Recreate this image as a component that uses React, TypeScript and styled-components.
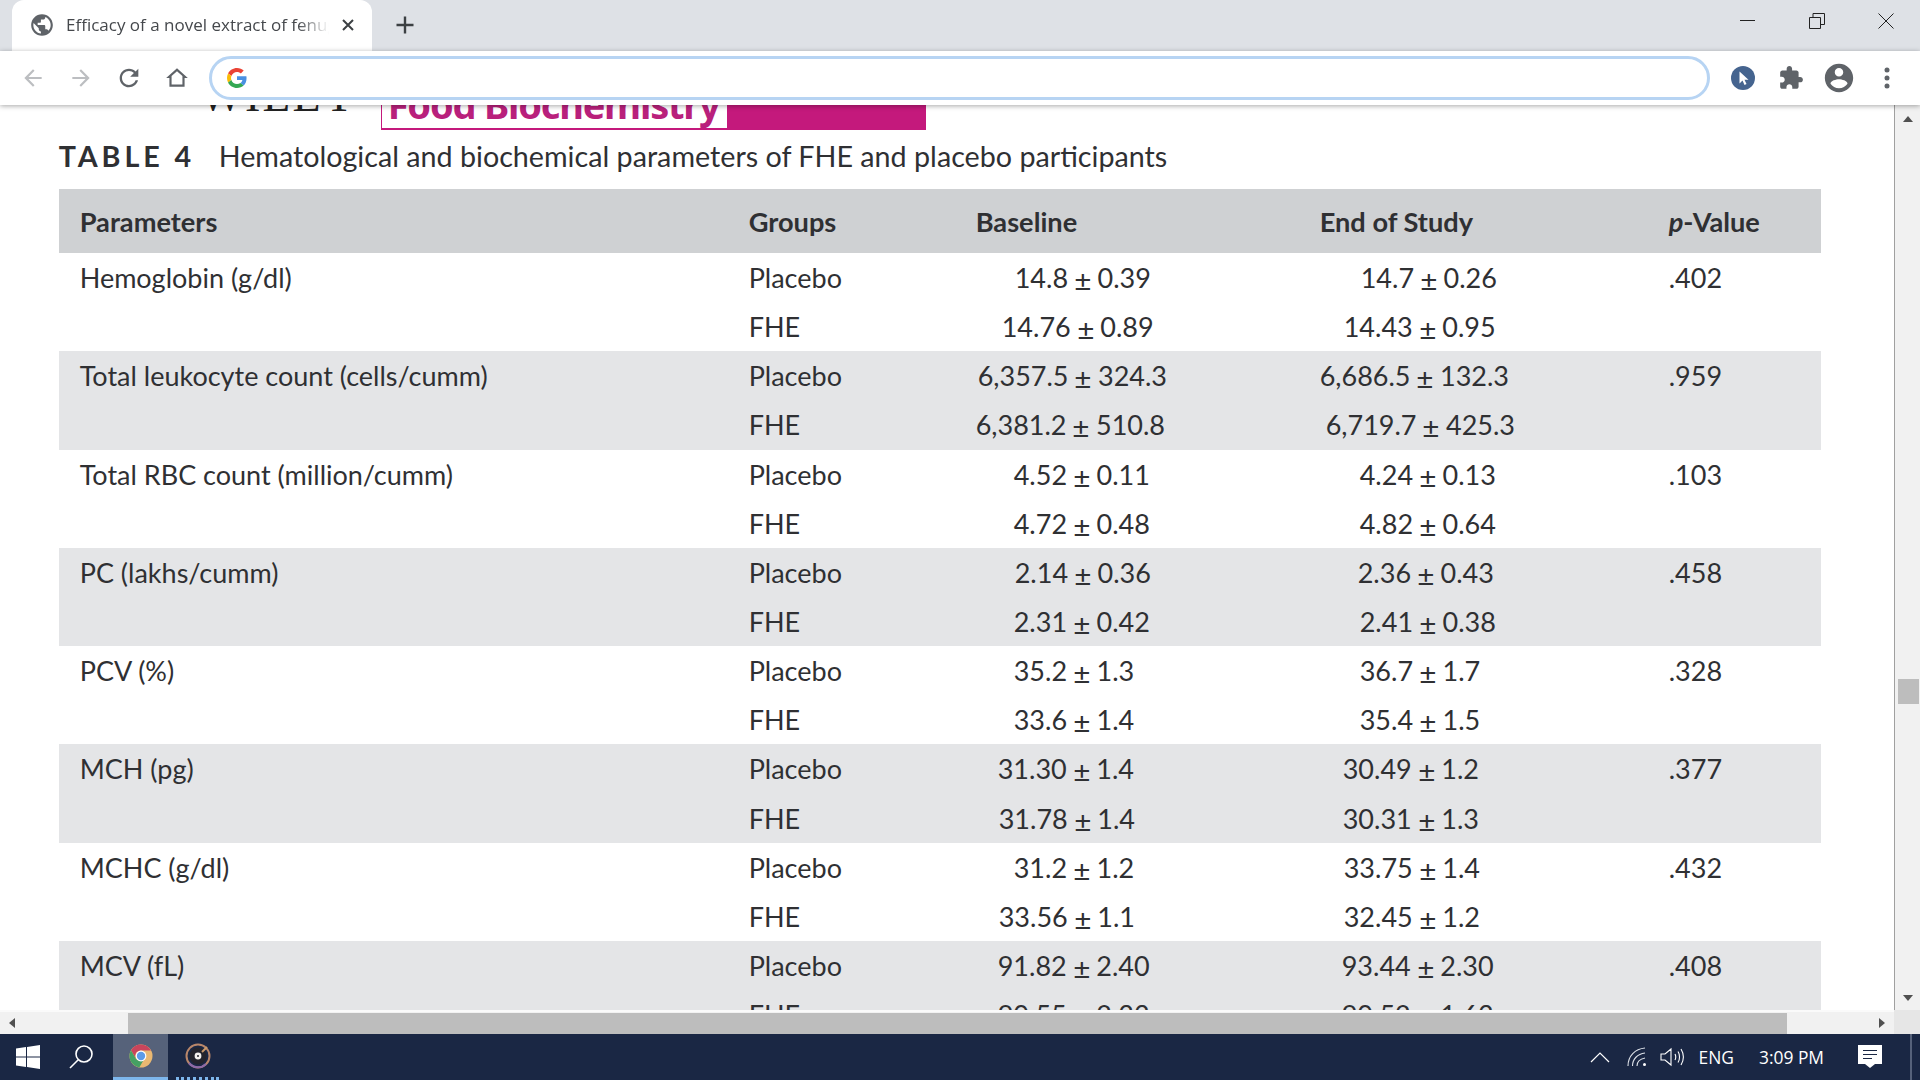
import React from "react";
import styled, { createGlobalStyle } from "styled-components";

const GlobalStyle = createGlobalStyle`
  html, body { margin: 0; padding: 0; height: 100%; overflow: hidden; background: #fff; }
  #root { height: 100%; }
`;

type RowData = { name?: string; group: string; base: string; baseIndent: number; end: string; endIndent: number; p?: string };

const rows: RowData[] = [
  { name: "Hemoglobin (g/dl)", group: "Placebo", base: "14.8 ± 0.39", baseIndent: 39, end: "14.7 ± 0.26", endIndent: 41, p: ".402" },
  { group: "FHE", base: "14.76 ± 0.89", baseIndent: 26, end: "14.43 ± 0.95", endIndent: 24 },
  { name: "Total leukocyte count (cells/cumm)", group: "Placebo", base: "6,357.5 ± 324.3", baseIndent: 2, end: "6,686.5 ± 132.3", endIndent: 0, p: ".959" },
  { group: "FHE", base: "6,381.2 ± 510.8", baseIndent: 0, end: "6,719.7 ± 425.3", endIndent: 6 },
  { name: "Total RBC count (million/cumm)", group: "Placebo", base: "4.52 ± 0.11", baseIndent: 38, end: "4.24 ± 0.13", endIndent: 40, p: ".103" },
  { group: "FHE", base: "4.72 ± 0.48", baseIndent: 38, end: "4.82 ± 0.64", endIndent: 40 },
  { name: "PC (lakhs/cumm)", group: "Placebo", base: "2.14 ± 0.36", baseIndent: 39, end: "2.36 ± 0.43", endIndent: 38, p: ".458" },
  { group: "FHE", base: "2.31 ± 0.42", baseIndent: 38, end: "2.41 ± 0.38", endIndent: 40 },
  { name: "PCV (%)", group: "Placebo", base: "35.2 ± 1.3", baseIndent: 38, end: "36.7 ± 1.7", endIndent: 40, p: ".328" },
  { group: "FHE", base: "33.6 ± 1.4", baseIndent: 38, end: "35.4 ± 1.5", endIndent: 40 },
  { name: "MCH (pg)", group: "Placebo", base: "31.30 ± 1.4", baseIndent: 22, end: "30.49 ± 1.2", endIndent: 23, p: ".377" },
  { group: "FHE", base: "31.78 ± 1.4", baseIndent: 23, end: "30.31 ± 1.3", endIndent: 23 },
  { name: "MCHC (g/dl)", group: "Placebo", base: "31.2 ± 1.2", baseIndent: 38, end: "33.75 ± 1.4", endIndent: 24, p: ".432" },
  { group: "FHE", base: "33.56 ± 1.1", baseIndent: 23, end: "32.45 ± 1.2", endIndent: 24 },
  { name: "MCV (fL)", group: "Placebo", base: "91.82 ± 2.40", baseIndent: 22, end: "93.44 ± 2.30", endIndent: 22, p: ".408" },
  { group: "FHE", base: "90.55 ± 2.33", baseIndent: 22, end: "90.52 ± 1.63", endIndent: 22 },
];

const Screen = styled.div`
  height: 1080px;
  width: 1920px;
  display: flex;
  flex-direction: column;
  overflow: hidden;
`;

/* browser chrome */
const TabStrip = styled.div`
  height: 51px;
  flex: none;
  background: #dee1e6;
  display: flex;
  padding-left: 12px;
`;

const Tab = styled.div`
  width: 360px;
  height: 51px;
  background: #fff;
  border-radius: 12px 12px 0 0;
  display: flex;
  align-items: center;
  padding: 0 17px 1px 17px;
  box-sizing: border-box;
`;

const TabTitle = styled.span`
  flex: 1;
  margin-left: 11px;
  overflow: hidden;
  white-space: nowrap;
  font: 17px/20px "Open Sans", "Noto Sans", sans-serif;
  color: #45484c;
  -webkit-mask-image: linear-gradient(to right, #000 88%, transparent 100%);
  mask-image: linear-gradient(to right, #000 88%, transparent 100%);
`;

const NewTab = styled.div`
  width: 24px;
  height: 24px;
  margin: 13px 0 0 21px;
`;

const WindowControls = styled.div`
  margin-left: auto;
  display: flex;
  gap: 53px;
  padding: 13px 26px 0 0;
  align-items: flex-start;
`;

const Toolbar = styled.div`
  height: 54px;
  flex: none;
  background: #fff;
  display: flex;
  align-items: center;
  padding: 0 9px;
  box-shadow: 0 1px 5px rgba(0, 0, 0, 0.35);
  position: relative;
  z-index: 2;
`;

const ToolButton = styled.div`
  width: 48px;
  height: 48px;
  flex: none;
  display: flex;
  align-items: center;
  justify-content: center;
`;

const Omnibox = styled.div`
  flex: 1;
  height: 44px;
  margin: 0 9px 0 8px;
  box-sizing: border-box;
  border: 3px solid #b7d4f3;
  border-radius: 22px;
  display: flex;
  align-items: center;
  padding-left: 15px;
`;

/* page */
const Viewport = styled.div`
  flex: 1;
  min-height: 0;
  display: grid;
  grid-template-columns: 1fr 26px;
  grid-template-rows: 1fr 24px;
`;

const Page = styled.div`
  overflow: hidden;
  padding-left: 58.7px;
  font-family: Lato, "Open Sans", sans-serif;
  color: #2f3033;
`;

const Banner = styled.div`
  height: 25px;
  display: flex;
`;

const WileyClip = styled.div`
  width: 181px;
  margin-left: 141px;
  height: 6px;
  overflow: hidden;
  display: flex;
  align-items: flex-end;
`;

const Wiley = styled.span`
  font: 46px/30px "Liberation Serif", serif;
  letter-spacing: 2px;
  color: #222;
  white-space: nowrap;
`;

const JournalBox = styled.div`
  width: 346px;
  height: 25px;
  box-sizing: border-box;
  border: solid #c4197c;
  border-width: 0 0 2px 1px;
  overflow: hidden;
  display: flex;
  align-items: flex-end;
  padding: 0 0 0 6px;
`;

const JournalName = styled.span`
  font: bold 38px/48px "Noto Sans", "Open Sans", sans-serif;
  letter-spacing: -1.2px;
  color: #b9207c;
  white-space: nowrap;
`;

const JournalFill = styled.div`
  width: 199px;
  height: 25px;
  background: #c4197c;
`;

const Caption = styled.div`
  height: 52px;
  margin-bottom: 7px;
  padding-bottom: 1px;
  box-sizing: border-box;
  display: flex;
  align-items: center;
  font-size: 28.7px;
`;

const CaptionLabel = styled.span`
  font-weight: 700;
  letter-spacing: 3.9px;
  width: 160px;
  flex: none;
`;

const Table = styled.div`
  width: 1762px;
`;

const columns = "669px 227px 344px 349px 1fr";

const HeadRow = styled.div`
  height: 64px;
  background: #cfd1d3;
  display: grid;
  grid-template-columns: ${columns};
  align-items: center;
  padding-left: 21px;
  font-size: 27.2px;
  font-weight: 700;
`;

const Row = styled.div<{ $shaded: boolean }>`
  height: 49.15px;
  background: ${(p) => (p.$shaded ? "#e4e5e7" : "#fff")};
  display: grid;
  grid-template-columns: ${columns};
  align-items: center;
  padding-left: 21px;
  font-size: 27px;
  white-space: nowrap;
`;

const ValueCell = styled.div<{ $indent: number }>`
  padding-left: ${(p) => p.$indent}px;
`;

const PlusMinus = styled.span`
  display: inline-block;
  transform: translateY(2px) scale(1.1);
`;

const TrackV = styled.div`
  background: #f1f1f1;
  border-left: 1px solid #a0a0a0;
  display: flex;
  flex-direction: column;
  align-items: center;
  padding: 0 0 0 1px;
`;

const ThumbV = styled.div`
  width: 21px;
  height: 25px;
  background: #bdbdbd;
  margin-top: 557px;
`;

const TrackH = styled.div`
  background: #f1f1f1;
  border-top: 2px solid #fafafa;
  display: flex;
  align-items: center;
`;

const ThumbH = styled.div`
  width: 1659px;
  height: 21px;
  flex: none;
  background: #bdbdbd;
  margin: 0 92px 0 113px;
`;

const Corner = styled.div`
  background: #e6e6e6;
`;

const Arrow = styled.div<{ $dir: "up" | "down" | "left" | "right" }>`
  width: 0;
  height: 0;
  flex: none;
  border-style: solid;
  border-color: transparent;
  ${(p) =>
    p.$dir === "up"
      ? "border-width: 0 5.5px 6px; border-bottom-color: #505050; margin-top: 11px;"
      : p.$dir === "down"
        ? "border-width: 6px 5.5px 0; border-top-color: #505050; margin-top: auto; margin-bottom: 9px;"
        : p.$dir === "left"
          ? "border-width: 5.5px 6px 5.5px 0; border-right-color: #505050; margin-left: 9px;"
          : "border-width: 5.5px 0 5.5px 6px; border-left-color: #505050;"}
`;

/* taskbar */
const Taskbar = styled.div`
  height: 46px;
  flex: none;
  background: #1a2744;
  display: flex;
  align-items: center;
  color: #fff;
  font: 17.4px "Open Sans", "Noto Sans", sans-serif;
`;

const TaskIcon = styled.div<{ $width: number; $active?: boolean; $mark?: "solid" | "dotted"; $shift?: number; $nudge?: number }>`
  width: ${(p) => p.$width}px;
  height: 46px;
  flex: none;
  box-sizing: border-box;
  display: flex;
  align-items: center;
  justify-content: center;
  margin-left: ${(p) => p.$shift ?? 0}px;
  padding-right: ${(p) => p.$nudge ?? 0}px;
  background: ${(p) => (p.$active ? "#56627a" : "transparent")};
  border-bottom: ${(p) => (p.$mark ? `3px ${p.$mark} #7db6ec` : "none")};
`;

const Tray = styled.div`
  margin-left: auto;
  display: flex;
  align-items: center;
  padding-right: 8px;
`;

const TrayItem = styled.div<{ $gap: number }>`
  margin-left: ${(p) => p.$gap}px;
  display: flex;
  align-items: center;
  white-space: nowrap;
`;

const EdgeLine = styled.div`
  width: 2px;
  height: 46px;
  background: #55617a;
  margin-left: 28px;
`;

const ChromeIcon = ({ size, fill, d }: { size: number; fill: string; d: string }) => (
  <svg width={size} height={size} viewBox="0 0 24 24" fill={fill}>
    <path d={d} fillRule="evenodd" />
  </svg>
);

const GoogleG = () => (
  <svg width="20" height="20" viewBox="0 0 48 48">
    <path fill="#EA4335" d="M24 9.5c3.5 0 6.7 1.2 9.2 3.6l6.9-6.9C35.9 2.4 30.5 0 24 0 14.6 0 6.5 5.4 2.6 13.2l8 6.2C12.4 13.7 17.7 9.5 24 9.5z" />
    <path fill="#4A90E2" d="M46.9 24.5c0-1.6-.1-3.1-.4-4.5H24v9h12.9c-.6 3-2.2 5.5-4.8 7.2l7.7 6c4.5-4.2 7.1-10.3 7.1-17.7z" />
    <path fill="#FBBC05" d="M10.5 28.6c-.5-1.4-.8-3-.8-4.6s.3-3.2.8-4.6l-8-6.2C.9 16.5 0 20.1 0 24s.9 7.5 2.6 10.8l7.9-6.2z" />
    <path fill="#34A853" d="M24 48c6.5 0 11.9-2.1 15.9-5.8l-7.7-6c-2.2 1.4-4.9 2.3-8.2 2.3-6.3 0-11.6-4.2-13.5-9.9l-8 6.2C6.5 42.6 14.6 48 24 48z" />
  </svg>
);

const ChromeLogo = () => (
  <svg width="24" height="24" viewBox="0 0 24 24">
    <circle cx="12" cy="12" r="11.5" fill="#e9b872" />
    <path d="M12 .5A11.5 11.5 0 0 0 2 6.3l5 8.7a5.5 5.5 0 0 1 5-8.5h10A11.5 11.5 0 0 0 12 .5z" fill="#c9455c" />
    <path d="M2 6.3A11.5 11.5 0 0 0 10.3 23.4l5-8.7A5.5 5.5 0 0 1 7 15z" fill="#45a163" />
    <circle cx="12" cy="12" r="5.4" fill="#fff" />
    <circle cx="12" cy="12" r="4.2" fill="#5d9be8" />
  </svg>
);

const DiscLogo = () => (
  <svg width="26" height="26" viewBox="0 0 26 26" fill="none">
    <circle cx="13" cy="13" r="11.5" stroke="#b8866a" strokeWidth="2" />
    <path d="M4 20a11.5 11.5 0 0 0 17 1" stroke="#8d6aa8" strokeWidth="2" />
    <circle cx="13" cy="13" r="8.5" fill="#24242c" />
    <circle cx="13" cy="13" r="3.4" fill="#f4f1ee" />
    <circle cx="13" cy="13" r="1" fill="#24242c" />
    <path d="M17 9l5-5" stroke="#c99a6c" strokeWidth="2" />
  </svg>
);

const Value = ({ text }: { text: string }) => {
  const [left, right] = text.split(" ± ");
  return (
    <>
      {left} <PlusMinus>±</PlusMinus> {right}
    </>
  );
};

const App = () => (
  <Screen>
    <GlobalStyle />
    <TabStrip>
      <Tab>
        <ChromeIcon size={26} fill="#5f6368" d="M12 2C6.48 2 2 6.48 2 12s4.48 10 10 10 10-4.48 10-10S17.52 2 12 2zm-1 17.93c-3.95-.49-7-3.85-7-7.93 0-.62.08-1.21.21-1.79L9 15v1c0 1.1.9 2 2 2v1.93zm6.9-2.54c-.26-.81-1-1.39-1.9-1.39h-1v-3c0-.55-.45-1-1-1H8v-2h2c.55 0 1-.45 1-1V7h2c1.1 0 2-.9 2-2v-.41c2.93 1.19 5 4.06 5 7.41 0 2.08-.8 3.97-2.1 5.39z" />
        <TabTitle>Efficacy of a novel extract of fenugreek</TabTitle>
        <svg width="14" height="14" viewBox="0 0 14 14" stroke="#3c4043" strokeWidth="2" style={{ marginLeft: 12 }}>
          <path d="M2 2l10 10M12 2L2 12" />
        </svg>
      </Tab>
      <NewTab>
        <svg width="24" height="24" viewBox="0 0 24 24" stroke="#3c4043" strokeWidth="2.4">
          <path d="M12 3.5v17M3.5 12h17" />
        </svg>
      </NewTab>
      <WindowControls>
        <svg width="16" height="16" viewBox="0 0 16 16" stroke="#222" strokeWidth="1"><path d="M0 7.5h15" /></svg>
        <svg width="16" height="16" viewBox="0 0 16 16" stroke="#222" strokeWidth="1" fill="none"><path d="M.5 4.5h11v11H.5zM4 4.5V.5h11.5v11h-4" /></svg>
        <svg width="16" height="16" viewBox="0 0 16 16" stroke="#222" strokeWidth="1"><path d="M.5.5l15 15M15.500 .5l-15 15" /></svg>
      </WindowControls>
    </TabStrip>
    <Toolbar>
      <ToolButton><ChromeIcon size={26} fill="#bcbec1" d="M20 11H7.83l5.59-5.59L12 4l-8 8 8 8 1.41-1.41L7.83 13H20v-2z" /></ToolButton>
      <ToolButton><ChromeIcon size={26} fill="#bcbec1" d="M12 4l-1.410 1.41L16.170 11H4v2h12.170l-5.580 5.590L12 20l8-8z" /></ToolButton>
      <ToolButton><ChromeIcon size={28} fill="#5f6368" d="M17.650 6.350C16.200 4.900 14.210 4 12 4c-4.420 0-7.990 3.580-7.990 8s3.570 8 7.990 8c3.730 0 6.840-2.550 7.730-6h-2.080c-.820 2.330-3.040 4-5.650 4-3.310 0-6-2.690-6-6s2.690-6 6-6c1.660 0 3.140.690 4.220 1.780L13 11h7V4l-2.350 2.350z" /></ToolButton>
      <ToolButton><ChromeIcon size={26} fill="#5f6368" d="M12 5.690l5 4.500V18H7v-7.810zM12 3L2 12h3v8h14v-8h3z" /></ToolButton>
      <Omnibox><GoogleG /></Omnibox>
      <ToolButton>
        <svg width="24" height="24" viewBox="0 0 24 24">
          <circle cx="12" cy="12" r="12" fill="#45648f" />
          <path d="M8.500 5.500v12l3-3 2 4.500 2-1-2-4.300h4z" fill="#fff" />
        </svg>
      </ToolButton>
      <ToolButton><ChromeIcon size={26} fill="#5f6368" d="M20.500 11H19V7c0-1.100-.9-2-2-2h-4V3.500C13 2.120 11.880 1 10.500 1S8 2.120 8 3.500V5H4c-1.100 0-1.990.9-1.990 2v3.800H3.500c1.490 0 2.700 1.210 2.700 2.700s-1.210 2.700-2.700 2.700H2V20c0 1.100.9 2 2 2h3.800v-1.500c0-1.490 1.210-2.700 2.700-2.700 1.490 0 2.700 1.210 2.700 2.700V22H17c1.100 0 2-.9 2-2v-4h1.500c1.380 0 2.500-1.120 2.500-2.500S21.880 11 20.500 11z" /></ToolButton>
      <ToolButton><ChromeIcon size={34} fill="#5f6368" d="M12 2C6.480 2 2 6.480 2 12s4.480 10 10 10 10-4.480 10-10S17.520 2 12 2zm0 3c1.660 0 3 1.340 3 3s-1.340 3-3 3-3-1.340-3-3 1.340-3 3-3zm0 14.200c-2.500 0-4.710-1.280-6-3.220.03-1.990 4-3.080 6-3.080 1.990 0 5.970 1.090 6 3.080-1.290 1.940-3.500 3.220-6 3.220z" /></ToolButton>
      <ToolButton>
        <svg width="6" height="22" viewBox="0 0 6 22" fill="#5f6368">
          <circle cx="3" cy="3" r="2.500" /><circle cx="3" cy="11" r="2.500" /><circle cx="3" cy="19" r="2.500" />
        </svg>
      </ToolButton>
    </Toolbar>
    <Viewport>
      <Page>
        <Banner>
          <WileyClip><Wiley>WILEY</Wiley></WileyClip>
          <JournalBox><JournalName>Food Biochemistry</JournalName></JournalBox>
          <JournalFill />
        </Banner>
        <Caption>
          <CaptionLabel>TABLE 4</CaptionLabel>
          <span>Hematological and biochemical parameters of FHE and placebo participants</span>
        </Caption>
        <Table>
          <HeadRow>
            <div>Parameters</div>
            <div>Groups</div>
            <div>Baseline</div>
            <div>End of Study</div>
            <div><i>p</i>-Value</div>
          </HeadRow>
          {rows.map((r, i) => (
            <Row key={i} $shaded={Math.floor(i / 2) % 2 === 1}>
              <div>{r.name}</div>
              <div>{r.group}</div>
              <ValueCell $indent={r.baseIndent}><Value text={r.base} /></ValueCell>
              <ValueCell $indent={r.endIndent}><Value text={r.end} /></ValueCell>
              <div>{r.p}</div>
            </Row>
          ))}
        </Table>
      </Page>
      <TrackV>
        <Arrow $dir="up" />
        <ThumbV />
        <Arrow $dir="down" />
      </TrackV>
      <TrackH>
        <Arrow $dir="left" />
        <ThumbH />
        <Arrow $dir="right" />
      </TrackH>
      <Corner />
    </Viewport>
    <Taskbar>
      <TaskIcon $width={56}>
        <svg width="24" height="24" viewBox="0 0 24 24" fill="#fff">
          <path d="M0 3.500l10-1.400v9.400H0zM11 2l13-2v11.500H11zM0 12.500h10v9.400L0 20.500zM11 12.500h13V24l-13-2z" />
        </svg>
      </TaskIcon>
      <TaskIcon $width={57} $nudge={7}>
        <svg width="26" height="26" viewBox="0 0 26 26" fill="none" stroke="#fff" strokeWidth="1.600">
          <circle cx="16" cy="10" r="8" /><path d="M10 16L2 24" />
        </svg>
      </TaskIcon>
      <TaskIcon $width={55} $active $mark="solid"><ChromeLogo /></TaskIcon>
      <TaskIcon $width={43} $mark="dotted" $shift={8}><DiscLogo /></TaskIcon>
      <Tray>
        <TrayItem $gap={0}>
          <svg width="20" height="12" viewBox="0 0 20 12" fill="none" stroke="#fff" strokeWidth="1.200"><path d="M1 11l9-9 9 9" /></svg>
        </TrayItem>
        <TrayItem $gap={17}>
          <svg width="20" height="20" viewBox="0 0 20 20" fill="none" stroke="#dfe3ea" strokeWidth="1.100">
            <path d="M1 19C1 9 8 2 18 1M5.500 19c0-7 5-12 12.500-13M10 19c0-4 3-7 8-8" /><circle cx="17.500" cy="17.500" r="1.500" fill="#fff" stroke="none" />
          </svg>
        </TrayItem>
        <TrayItem $gap={13}>
          <svg width="24" height="20" viewBox="0 0 24 20" fill="none" stroke="#fff" strokeWidth="1.100">
            <path d="M1 7h4l6-5v16l-6-5H1zM15 7c1 2 1 4 0 6M18 4.500c2 3 2 8 0 11M21 2c3 5 3 11 0 16" />
          </svg>
        </TrayItem>
        <TrayItem $gap={15}>ENG</TrayItem>
        <TrayItem $gap={25}>3:09 PM</TrayItem>
        <TrayItem $gap={34}>
          <svg width="24" height="24" viewBox="0 0 24 24">
            <path d="M0 0h24v19h-7l-5 4-5-4H0z" fill="#fff" />
            <path d="M5 5.500h14M5 9.500h14M5 13.500h9" stroke="#1a2744" strokeWidth="1" />
          </svg>
        </TrayItem>
        <EdgeLine />
      </Tray>
    </Taskbar>
  </Screen>
);

export default App;
